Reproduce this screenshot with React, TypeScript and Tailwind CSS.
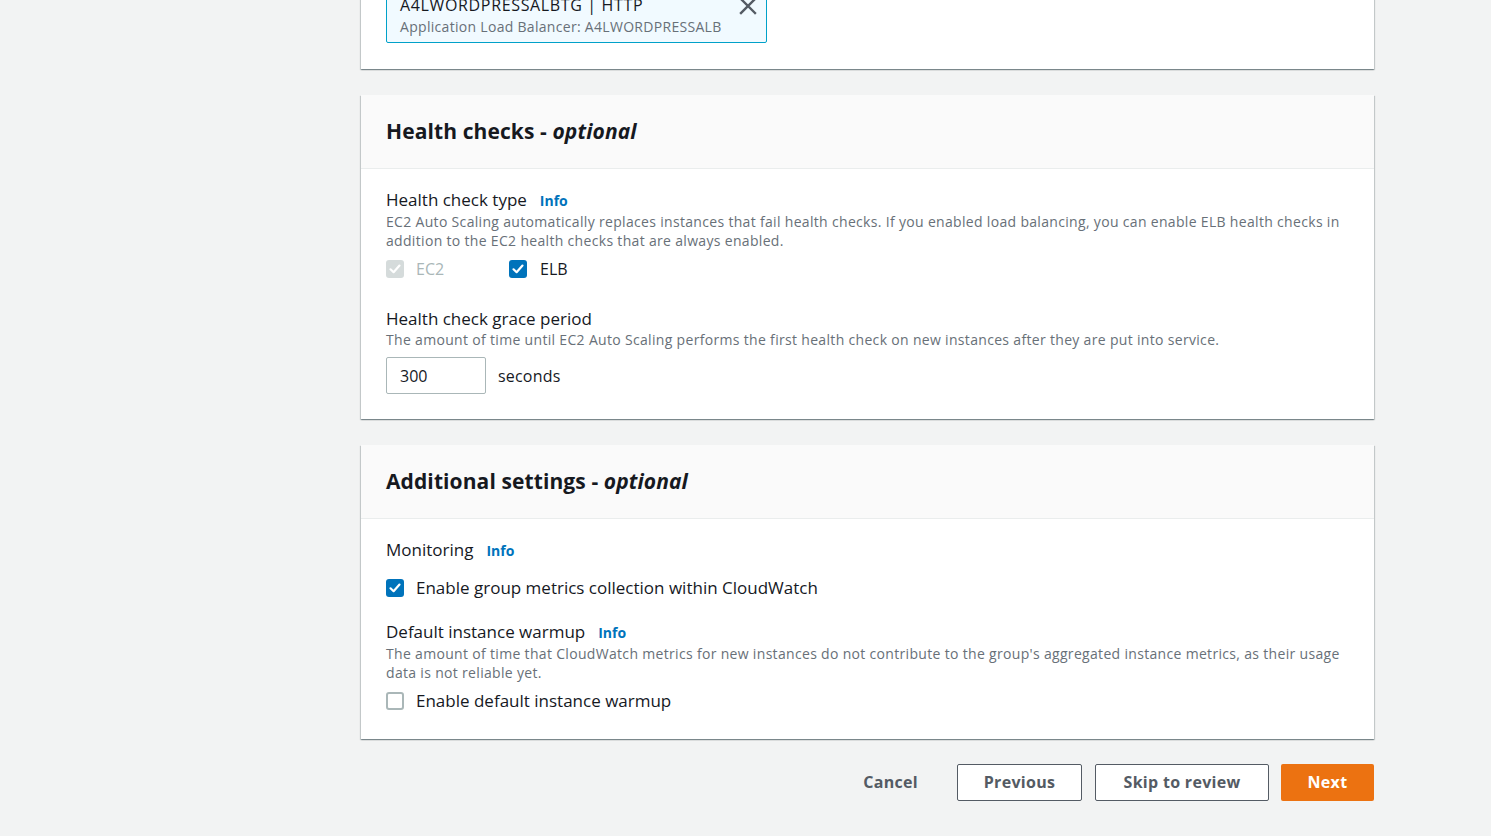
import React from "react";

const font = { fontFamily: '"Open Sans", "Noto Sans", Arial, sans-serif' };

function Check({ checked, disabled }: { checked?: boolean; disabled?: boolean }) {
  if (!checked) {
    return <span className="inline-block w-[18px] h-[18px] rounded-[3px] border-2 border-[#aab7b8] bg-white" />;
  }
  return (
    <span
      className={
        "inline-flex items-center justify-center w-[18px] h-[18px] rounded-[3px] " +
        (disabled ? "bg-[#d5dbdb]" : "bg-[#0073bb]")
      }
    >
      <svg width="14" height="14" viewBox="0 0 14 14" fill="none">
        <path d="M2.5 7.3 L5.6 10.2 L11.5 3.6" stroke="white" strokeWidth="2.2" strokeLinecap="round" strokeLinejoin="round" />
      </svg>
    </span>
  );
}

function Info() {
  return <span className="ml-[13px] text-[14px] font-bold text-[#0073bb]">Info</span>;
}

function Card({ title, children }: { title?: string; children: React.ReactNode }) {
  return (
    <section className="bg-white shadow-[0_1px_1px_0_rgba(0,28,36,0.3),1px_1px_1px_0_rgba(0,28,36,0.15),-1px_1px_1px_0_rgba(0,28,36,0.15)]">
      {title && (
        <div className="h-[74px] bg-[#fafafa] border-b border-[#eaeded] px-[25px] flex items-center">
          <h2 className="text-[21px] font-bold text-[#16191f] leading-none pb-[1px] tracking-[0.1px]">
            {title} - <i>optional</i>
          </h2>
        </div>
      )}
      <div className="px-[25px]">{children}</div>
    </section>
  );
}

export default function App() {
  return (
    <div className="min-h-[836px] bg-[#f2f3f3] overflow-hidden text-[#16191f]" style={font}>
      <div className="ml-[361px] w-[1013px] -mt-[18px] flex flex-col gap-[26px] pb-[36px]">
        <Card>
          <div className="pt-[6px] pb-[26px]">
            <div className="w-[381px] h-[55px] border border-[#00a1c9] rounded-[2px] bg-[#f1faff] pl-[13px] pr-[8px] pt-[5px] flex justify-between">
              <div>
                <div className="text-[16px] leading-[22px] tracking-[0.65px]">A4LWORDPRESSALBTG | HTTP</div>
                <div className="text-[14px] leading-[22px] text-[#687078] tracking-[0.3px]">Application Load Balancer: A4LWORDPRESSALB</div>
              </div>
              <svg width="20" height="20" viewBox="0 0 20 20" className="mt-[2px]">
                <path d="M3 3 L17 17 M17 3 L3 17" stroke="#545b64" strokeWidth="2.4" strokeLinecap="square" />
              </svg>
            </div>
          </div>
        </Card>

        <Card title="Health checks">
          <div className="pt-[20px] pb-[25px]">
            <div className="text-[17px] leading-[22px] flex items-baseline">
              Health check type <Info />
            </div>
            <p className="text-[14px] leading-[19px] text-[#687078] tracking-[0.32px]">
              EC2 Auto Scaling automatically replaces instances that fail health checks. If you enabled load balancing, you can enable ELB health checks in addition to the EC2 health checks that are always enabled.
            </p>
            <div className="flex items-center mt-[7px] h-[24px] text-[16px]">
              <Check checked disabled />
              <span className="ml-[12px] text-[#aab7b8] w-[93px]">EC2</span>
              <Check checked />
              <span className="ml-[13px]">ELB</span>
            </div>
            <div className="text-[17px] leading-[22px] mt-[27px]">Health check grace period</div>
            <p className="text-[14px] leading-[19px] text-[#687078] tracking-[0.32px]">
              The amount of time until EC2 Auto Scaling performs the first health check on new instances after they are put into service.
            </p>
            <div className="flex items-center mt-[8px]">
              <div className="w-[100px] h-[37px] border border-[#aab7b8] rounded-[2px] px-[13px] flex items-center text-[16px]">300</div>
              <span className="ml-[12px] text-[16px] tracking-[0.2px]">seconds</span>
            </div>
          </div>
        </Card>

        <Card title="Additional settings">
          <div className="pt-[20px] pb-[26px]">
            <div className="text-[17px] leading-[22px] flex items-baseline">
              Monitoring <Info />
            </div>
            <label className="flex items-center mt-[13px] h-[26px] text-[17px]">
              <Check checked />
              <span className="ml-[12px]">Enable group metrics collection within CloudWatch</span>
            </label>
            <div className="text-[17px] leading-[22px] mt-[20px] flex items-baseline">
              Default instance warmup <Info />
            </div>
            <p className="text-[14px] leading-[19px] text-[#687078] tracking-[0.32px]">
              The amount of time that CloudWatch metrics for new instances do not contribute to the group's aggregated instance metrics, as their usage data is not reliable yet.
            </p>
            <label className="flex items-center mt-[7px] h-[24px] text-[17px]">
              <Check />
              <span className="ml-[12px]">Enable default instance warmup</span>
            </label>
          </div>
        </Card>

        <div className="flex justify-end items-center -mt-[1px] text-[16px] font-bold tracking-[0.3px]">
          <button className="h-[37px] px-[20px] pb-[2px] text-[#545b64] mr-[19px]">Cancel</button>
          <button className="h-[37px] w-[125px] pb-[2px] border border-[#545b64] rounded-[2px] bg-white text-[#545b64] mr-[13px]">Previous</button>
          <button className="h-[37px] w-[174px] pb-[2px] border border-[#545b64] rounded-[2px] bg-white text-[#545b64] mr-[12px]">Skip to review</button>
          <button className="h-[37px] w-[93px] pb-[2px] rounded-[2px] bg-[#ec7211] text-white">Next</button>
        </div>
      </div>
    </div>
  );
}
